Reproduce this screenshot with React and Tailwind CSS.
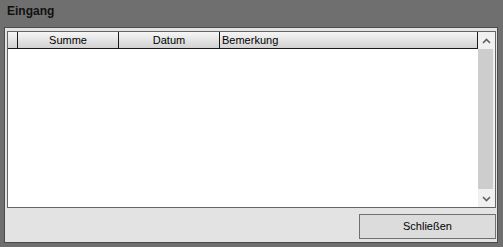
import React from 'react'

// Windows-Forms style dialog: "Eingang" list with a close button

function Chevron({ down }) {
    return (
        <svg width="9" height="6" viewBox="0 0 9 6" className="block">
            <path
                d={down ? 'M1 1 L4.5 4.5 L8 1' : 'M1 5 L4.5 1.5 L8 5'}
                fill="none"
                stroke="#606060"
                strokeWidth="1.6"
            />
        </svg>
    )
}

const columns = [
    { label: '', width: 'w-[10px]', align: 'justify-center' },
    { label: 'Summe', width: 'w-[101px]', align: 'justify-center' },
    { label: 'Datum', width: 'w-[101px]', align: 'justify-center' },
    { label: 'Bemerkung', width: 'w-[257px]', align: 'justify-start pl-[2px]' },
]

export default function App() {
    return (
        <div
            className="w-[503px] h-[247px] bg-[#6f6f6f] flex flex-col pl-[4px] pr-[5px] pb-[4px] text-[11px] text-black"
            style={{ fontFamily: '"Liberation Sans", Arial, sans-serif' }}
        >
            {/* Title */}
            <div className="h-[27px] shrink-0 pl-[3px] pt-[4px] font-bold text-[12px] leading-[14px] text-[#111]">
                Eingang
            </div>

            {/* Panel */}
            <div className="flex-1 border border-[#4b4b4b] bg-[#e3e3e3] flex flex-col pt-[3px] pl-[2px] pr-[1px]">
                {/* List view */}
                <div className="h-[177px] border border-[#646464] bg-white flex">
                    <div className="flex-1 flex flex-col">
                        <div className="h-[17px] flex">
                            <div className="flex border-b border-r border-[#1a1a1a] bg-gradient-to-b from-[#f6f6f6] to-[#d2d2d2]">
                                {columns.map((col, i) => (
                                    <div
                                        key={i}
                                        className={`${col.width} flex items-center ${col.align} leading-[16px] ${i < columns.length - 1 ? 'border-r border-[#1a1a1a]' : ''}`}
                                    >
                                        {col.label}
                                    </div>
                                ))}
                            </div>
                        </div>
                    </div>

                    {/* Scrollbar */}
                    <div className="w-[17px] bg-[#f0f0f0] flex flex-col">
                        <div className="h-[17px] flex items-center justify-center">
                            <Chevron />
                        </div>
                        <div className="flex-1 flex flex-col pb-[1px]">
                            <div className="h-[140px] w-[15px] bg-[#cdcdcd]" />
                        </div>
                        <div className="h-[17px] flex items-center justify-center">
                            <Chevron down />
                        </div>
                    </div>
                </div>

                {/* Button row */}
                <div className="flex justify-end mt-[6px]">
                    <button className="w-[137px] h-[25px] border border-[#707070] bg-[#dcdcdc] text-[11px] text-black flex items-center justify-center">
                        Schließen
                    </button>
                </div>
            </div>
        </div>
    )
}
